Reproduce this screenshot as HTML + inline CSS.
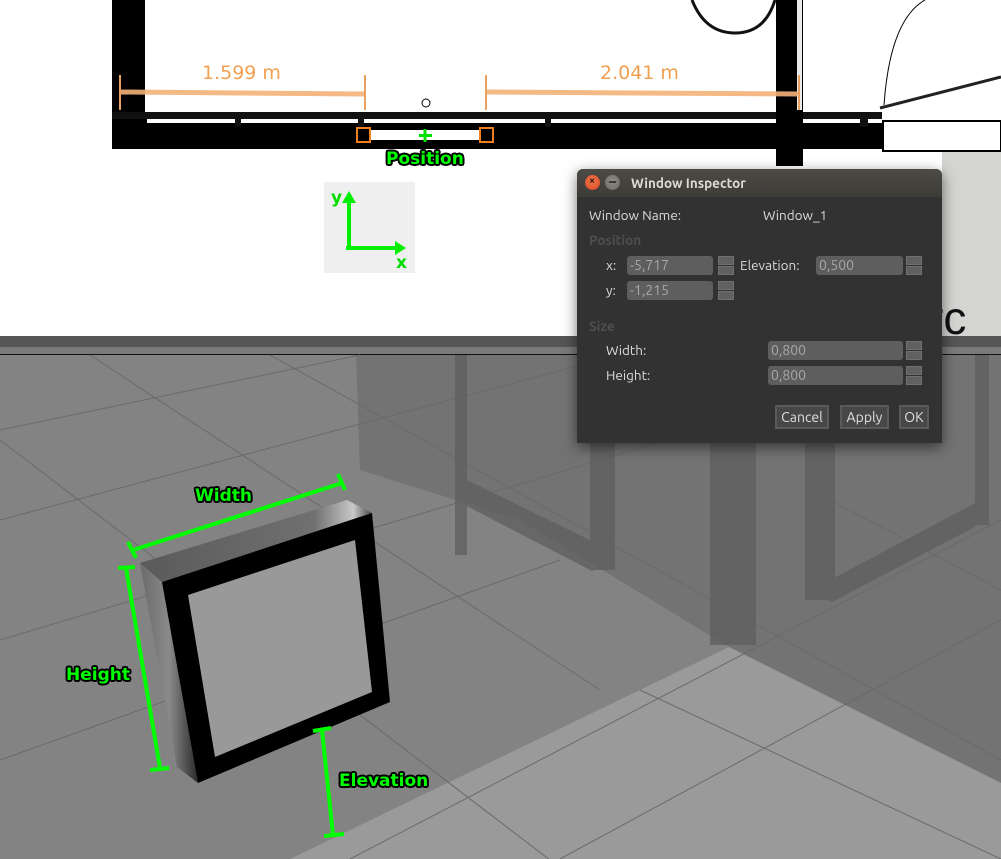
<!DOCTYPE html>
<html><head><meta charset="utf-8"><style>
*{margin:0;padding:0;box-sizing:border-box}
body{width:1001px;height:859px;overflow:hidden;position:relative;background:#848484;font-family:"Liberation Sans","DejaVu Sans",sans-serif}
svg.bg{position:absolute;left:0;top:0}
.lbl{position:absolute;font:bold 17px "DejaVu Sans","Liberation Sans",sans-serif;color:#00ff00;text-shadow:-2px 0 #000,2px 0 #000,0 -2px #000,0 2px #000,-1.5px -1.5px #000,1.5px 1.5px #000,-1.5px 1.5px #000,1.5px -1.5px #000;white-space:nowrap;letter-spacing:0}
.dlg{position:absolute;left:577px;top:169px;width:365px;height:274px;background:#323232;border-radius:6px 6px 0 0;box-shadow:0 4px 14px rgba(0,0,0,.55);font-family:"Ubuntu","DejaVu Sans","Liberation Sans",sans-serif;font-size:13.5px;color:#dcdcdc}
.tb{height:28px;background:linear-gradient(#4d4b45,#3c3b37);border-radius:6px 6px 0 0;position:relative}
.tb .t{position:absolute;left:54px;top:6px;font-weight:bold;font-size:13.5px;color:#dfdbd2}
.cb{position:absolute;top:6px;width:15px;height:15px;border-radius:50%}
.d{position:absolute;white-space:nowrap}
.g{color:#4e4e4e;font-weight:bold}
.in{position:absolute;height:19px;background:#5e5e5e;border-radius:3px;color:#a8a8a8;padding-left:3px;line-height:19px;font-size:14px}
.sp{position:absolute;width:16px;height:19px}
.sp i{display:block;height:9px;background:#606060;border:1px solid #707070;margin-bottom:1px}
.bt{position:absolute;height:24px;border:2px solid #5a5a5a;background:#474747;color:#e0e0e0;text-align:center;line-height:20px;font-size:14px}
</style></head><body>
<svg class="bg" width="1001" height="859" viewBox="0 0 1001 859">
<rect x="0" y="0" width="1001" height="336" fill="#fff"/>
<rect x="942" y="150" width="59" height="186" fill="#d4d4d2"/>
<text x="928" y="334" font-family="Liberation Sans" font-size="46" fill="#111">rc</text>
<rect x="112" y="0" width="35" height="148" fill="#000"/>
<rect x="145" y="0" width="8" height="118" fill="#fff"/>
<rect x="112" y="112" width="770" height="7" fill="#111"/>
<rect x="112" y="123" width="770" height="26" fill="#000"/>
<rect x="776" y="0" width="27" height="166" fill="#000"/>
<rect x="797" y="0" width="5" height="110" fill="#e8ecef"/>
<rect x="883" y="121" width="118" height="30" fill="#fff" stroke="#000" stroke-width="2"/>
<path d="M884 105 Q890 20 925 0" fill="none" stroke="#000" stroke-width="1"/>
<path d="M880 108 L1001 77" stroke="#222" stroke-width="3"/>
<path d="M692 0 Q705 33 735 33 Q765 33 775 0" fill="none" stroke="#111" stroke-width="3"/>
<rect x="235" y="113" width="6" height="14" fill="#111"/><rect x="358" y="113" width="6" height="14" fill="#111"/>
<rect x="545" y="113" width="6" height="14" fill="#111"/><rect x="860" y="113" width="8" height="14" fill="#111"/>
<g stroke="#f4b27a" stroke-width="5" opacity=".9"><line x1="120" y1="92" x2="364" y2="94"/><line x1="486" y1="92" x2="800" y2="94"/></g>
<g stroke="#e8a060" stroke-width="2"><line x1="120" y1="75" x2="120" y2="110"/><line x1="365" y1="75" x2="365" y2="110"/><line x1="486" y1="75" x2="486" y2="110"/><line x1="799" y1="75" x2="799" y2="110"/></g>
<text x="202" y="79" font-family="DejaVu Sans" font-size="19" fill="#f0a050">1.599 m</text>
<text x="600" y="79" font-family="DejaVu Sans" font-size="19" fill="#f0a050">2.041 m</text>
<rect x="370" y="130" width="110" height="10" fill="#fff"/>
<rect x="357" y="128" width="13" height="14" fill="#000" stroke="#f08020" stroke-width="2"/>
<rect x="480" y="128" width="13" height="14" fill="#000" stroke="#f08020" stroke-width="2"/>
<path d="M425 129v13M419 135.5h13" stroke="#00e000" stroke-width="3"/>
<circle cx="426" cy="103" r="4" fill="#fff" stroke="#000"/>
<rect x="324" y="182" width="91" height="91" fill="#efefef"/>
<path d="M349 248V198M346 248H398" stroke="#00ee00" stroke-width="4"/>
<path d="M342 203L349 191L356 203Z M395 241L406 248L395 255Z" fill="#00ee00"/>
<text x="331" y="203" font-family="DejaVu Sans" font-weight="bold" font-size="17" fill="#00dd00">y</text>
<text x="396" y="268" font-family="DejaVu Sans" font-weight="bold" font-size="17" fill="#00dd00">x</text>
<rect x="0" y="336" width="1001" height="11" fill="#555"/>
<rect x="0" y="347" width="1001" height="7" fill="#7a7a7a"/>
<rect x="0" y="354" width="1001" height="1.5" fill="#111"/>
<rect x="0" y="355" width="1001" height="504" fill="#838383"/>
<polygon points="356,355 1001,355 1001,783 729,647 520,520 360,470" fill="#6f6f6f" opacity=".8"/>
<polygon points="729,647 1001,783 1001,859 290,859" fill="#9a9a9a"/>
<g stroke="#6a6a6a" stroke-width="1" fill="none">
<line x1="0" y1="430" x2="360" y2="355"/><line x1="0" y1="520" x2="600" y2="360"/><line x1="0" y1="640" x2="700" y2="430"/>
<line x1="90" y1="355" x2="600" y2="690"/><line x1="0" y1="440" x2="550" y2="860"/><line x1="270" y1="355" x2="1001" y2="760"/>
<line x1="0" y1="760" x2="560" y2="560"/><line x1="560" y1="859" x2="1001" y2="620"/><line x1="640" y1="690" x2="1001" y2="859"/>
<line x1="350" y1="859" x2="1001" y2="520"/><line x1="830" y1="500" x2="1001" y2="590"/>
</g>
<g fill="#5e5e5e" opacity=".75">
<rect x="455" y="355" width="12" height="200"/><polygon points="455,500 592,571 615,562 600,545 467,480"/>
<rect x="590" y="430" width="25" height="140"/>
<rect x="710" y="440" width="46" height="205"/>
<rect x="805" y="440" width="30" height="160"/><polygon points="805,590 832,602 988,520 985,498 830,580"/>
<rect x="975" y="355" width="14" height="170"/>
</g>
<defs><linearGradient id="sg" x1="0" x2="1" y1="0" y2="0"><stop offset="0" stop-color="#6a6a6a"/><stop offset=".5" stop-color="#8a8a8a"/><stop offset="1" stop-color="#2a2a2a"/></linearGradient>
<linearGradient id="tg" x1="0" x2="1"><stop offset="0" stop-color="#5a5a5a"/><stop offset=".75" stop-color="#707070"/><stop offset=".92" stop-color="#c8c8c8"/><stop offset="1" stop-color="#444"/></linearGradient></defs>
<polygon points="140,563 162,582 198,783 177,767" fill="url(#sg)"/>
<polygon points="140,563 347,500 372,513 162,582" fill="url(#tg)"/>
<polygon points="162,582 372,513 390,702 198,783" fill="#000"/>
<polygon points="188,595 355,540 372,692 215,757" fill="#999"/>
<g stroke="#00ff00" stroke-width="4" fill="none">
<line x1="133" y1="550" x2="342" y2="483"/><line x1="128" y1="542" x2="136" y2="558"/><line x1="338" y1="474" x2="345" y2="490"/>
<line x1="126" y1="568" x2="160" y2="768"/><line x1="118" y1="568" x2="135" y2="567"/><line x1="150" y1="770" x2="169" y2="768"/>
<line x1="322" y1="730" x2="333" y2="835"/><line x1="313" y1="731" x2="331" y2="728"/><line x1="324" y1="836" x2="344" y2="834"/>
</g>
</svg>
<div class="lbl" style="left:386px;top:149px">Position</div>
<div class="lbl" style="left:195px;top:486px">Width</div>
<div class="lbl" style="left:66px;top:665px">Height</div>
<div class="lbl" style="left:339px;top:771px">Elevation</div>

<div class="dlg">
 <div class="tb">
  <div class="cb" style="left:8px;background:radial-gradient(circle at 50% 40%,#f27a50,#d8461d)"><span style="position:absolute;left:4px;top:0;font-size:11px;color:#3a1a10;font-weight:bold">×</span></div>
  <div class="cb" style="left:28px;background:radial-gradient(circle at 50% 40%,#8e8c86,#6a6862)"><span style="position:absolute;left:4px;top:6px;width:7px;height:2px;background:#3b3a36"></span></div>
  <div class="t">Window Inspector</div>
 </div>
 <div class="d" style="left:12px;top:38px">Window Name:</div>
 <div class="d" style="left:186px;top:38px">Window_1</div>
 <div class="d g" style="left:12px;top:63px">Position</div>
 <div class="d" style="left:29px;top:88px">x:</div>
 <div class="in" style="left:50px;top:87px;width:86px">-5,717</div>
 <div class="sp" style="left:141px;top:87px"><i></i><i></i></div>
 <div class="d" style="left:163px;top:88px">Elevation:</div>
 <div class="in" style="left:239px;top:87px;width:87px">0,500</div>
 <div class="sp" style="left:329px;top:87px"><i></i><i></i></div>
 <div class="d" style="left:29px;top:113px">y:</div>
 <div class="in" style="left:50px;top:112px;width:86px">-1,215</div>
 <div class="sp" style="left:141px;top:112px"><i></i><i></i></div>
 <div class="d g" style="left:12px;top:149px">Size</div>
 <div class="d" style="left:29px;top:173px">Width:</div>
 <div class="in" style="left:191px;top:172px;width:135px">0,800</div>
 <div class="sp" style="left:329px;top:172px"><i></i><i></i></div>
 <div class="d" style="left:29px;top:198px">Height:</div>
 <div class="in" style="left:191px;top:197px;width:135px">0,800</div>
 <div class="sp" style="left:329px;top:197px"><i></i><i></i></div>
 <div class="bt" style="left:198px;top:236px;width:54px">Cancel</div>
 <div class="bt" style="left:263px;top:236px;width:49px">Apply</div>
 <div class="bt" style="left:322px;top:236px;width:30px">OK</div>
</div>
</body></html>
